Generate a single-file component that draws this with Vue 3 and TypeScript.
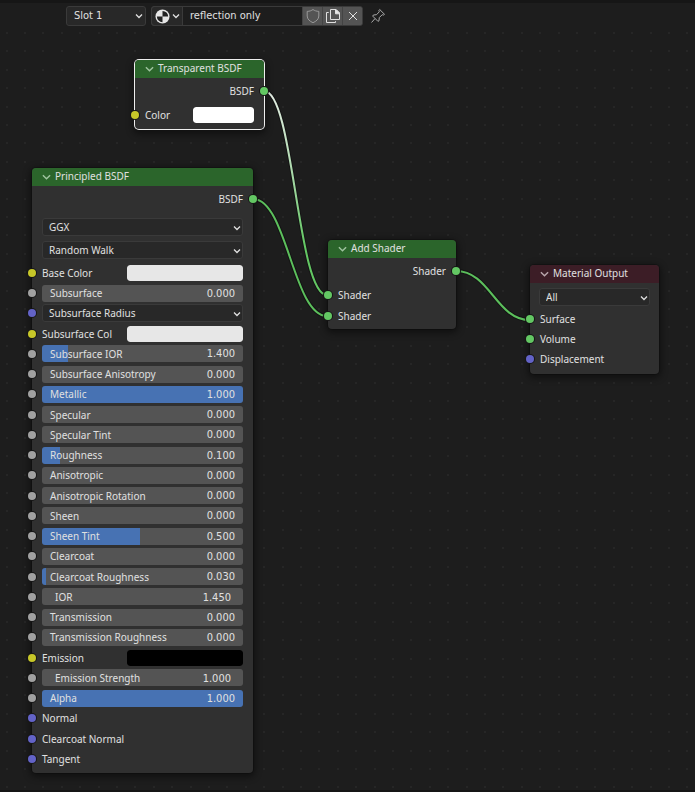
<script setup lang="ts">
import { reactive, ref } from 'vue'

type SocketKind = 'shader' | 'color' | 'value' | 'vector'
type RowKind = 'slider' | 'number' | 'swatch' | 'menu' | 'plain'

interface Row {
  id: string
  label: string
  kind: RowKind
  socket: SocketKind
  value?: string
  fill?: number
}

const slider = (id: string, label: string, value: string, fill = 0): Row => ({
  id, label, kind: 'slider', socket: 'value', value, fill,
})

const rows = reactive<Row[]>([
  slider('subsurface', 'Subsurface', '0.000'),
  { id: 'radius', label: 'Subsurface Radius', kind: 'menu', socket: 'vector' },
  { id: 'subcol', label: 'Subsurface Col', kind: 'swatch', socket: 'color', value: '#e7e7e7' },
  slider('subior', 'Subsurface IOR', '1.400', 13),
  slider('subaniso', 'Subsurface Anisotropy', '0.000'),
  slider('metallic', 'Metallic', '1.000', 100),
  slider('specular', 'Specular', '0.000'),
  slider('spectint', 'Specular Tint', '0.000'),
  slider('roughness', 'Roughness', '0.100', 9),
  slider('aniso', 'Anisotropic', '0.000'),
  slider('anisorot', 'Anisotropic Rotation', '0.000'),
  slider('sheen', 'Sheen', '0.000'),
  slider('sheentint', 'Sheen Tint', '0.500', 49),
  slider('clearcoat', 'Clearcoat', '0.000'),
  slider('ccrough', 'Clearcoat Roughness', '0.030', 2),
  { id: 'ior', label: 'IOR', kind: 'number', socket: 'value', value: '1.450' },
  slider('transmission', 'Transmission', '0.000'),
  slider('transrough', 'Transmission Roughness', '0.000'),
  { id: 'emission', label: 'Emission', kind: 'swatch', socket: 'color', value: '#000000' },
  { id: 'strength', label: 'Emission Strength', kind: 'number', socket: 'value', value: '1.000' },
  slider('alpha', 'Alpha', '1.000', 100),
  { id: 'normal', label: 'Normal', kind: 'plain', socket: 'vector' },
  { id: 'ccnormal', label: 'Clearcoat Normal', kind: 'plain', socket: 'vector' },
  { id: 'tangent', label: 'Tangent', kind: 'plain', socket: 'vector' },
])

const materialName = ref('reflection only')
const gridSteps = [4, 22, 41, 59, 78]
</script>

<template>
  <main class="editor">
    <svg class="backdrop" aria-hidden="true">
      <defs>
        <pattern id="dots" width="92" height="92" x="20" y="28" patternUnits="userSpaceOnUse">
          <template v-for="y in gridSteps" :key="y">
            <rect v-for="x in gridSteps" :key="x" :x="x" :y="y" width="2" height="2" />
          </template>
        </pattern>
        <linearGradient id="fade" gradientUnits="userSpaceOnUse" x1="264" y1="91" x2="327" y2="295">
          <stop offset="0" stop-color="#e8efe8" />
          <stop offset="0.35" stop-color="#b5dcb5" />
          <stop offset="0.75" stop-color="#63c763" />
        </linearGradient>
      </defs>
      <rect class="grid" x="0" y="28" width="100%" height="100%" fill="url(#dots)" />
      <g class="wire-edge">
        <path d="M264 91C294 91 297 295 327 295" />
        <path d="M253 199C287 199 293 316 327 316" />
        <path d="M456 271C490 271 496 320 530 320" />
      </g>
      <g class="wire">
        <path class="lit" d="M264 91C294 91 297 295 327 295" />
        <path d="M253 199C287 199 293 316 327 316" />
        <path d="M456 271C490 271 496 320 530 320" />
      </g>
    </svg>

    <header class="toolbar">
      <div class="menu slot">
        <select aria-label="Material slot"><option>Slot 1</option></select>
        <svg class="chev" viewBox="0 0 8 6"><path d="M1 1.5L4 4.5L7 1.5" /></svg>
      </div>
      <div class="datablock">
        <button class="browse" aria-label="Browse material">
          <svg class="ball" viewBox="0 0 16 16">
            <circle cx="8" cy="8" r="7.5" fill="#e6e6e6" />
            <path d="M8 8V2A6 6 0 0 1 14 8ZM8 8V14A6 6 0 0 1 2 8Z" fill="#222" />
          </svg>
          <svg class="chev" viewBox="0 0 8 6"><path d="M1 1.5L4 4.5L7 1.5" /></svg>
        </button>
        <input v-model="materialName" class="name" type="text" aria-label="Material name" />
        <button class="tool" aria-label="Fake user">
          <svg viewBox="0 0 16 16"><path class="dim" d="M8 1.5C6.4 2.7 4.6 3.3 2.2 3.4V8C2.2 11.2 4.8 13.3 8 14.7C11.2 13.3 13.8 11.2 13.8 8V3.4C11.4 3.3 9.6 2.7 8 1.5Z" /></svg>
        </button>
        <button class="tool" aria-label="New material">
          <svg viewBox="0 0 16 16">
            <path d="M5.5 1.5H11L14.5 5V11.5H5.5Z" />
            <path d="M10.5 1.5H11L14.5 5V5.8H10.5Z" fill="#e6e6e6" />
            <path d="M3.7 4.5H1.5V14.5H10.5V13.2" />
          </svg>
        </button>
        <button class="tool" aria-label="Unlink material">
          <svg viewBox="0 0 16 16"><path d="M4 4L12 12M12 4L4 12" /></svg>
        </button>
      </div>
      <button class="pin" aria-label="Pin">
        <svg viewBox="0 0 16 16"><path d="M9.7 1.5L14.5 6.3L13.4 7.1L12.2 6.7L9.3 9.6L9 12.8L7.9 13.3L2.7 8.1L3.4 7L6.5 6.7L9.3 3.8L8.9 2.6ZM5 10.6L1.5 14.5" /></svg>
      </button>
    </header>

    <section class="node transparent selected">
      <h2 class="title">
        <button aria-label="Collapse"><svg viewBox="0 0 10 6"><path d="M1 1L5 5L9 1" /></svg></button>
        Transparent BSDF
      </h2>
      <div class="row out first">BSDF<i class="socket shader" /></div>
      <div class="row color-row">
        <label for="tcolor">Color</label>
        <input id="tcolor" class="swatch" type="color" value="#ffffff" />
        <i class="socket color" />
      </div>
    </section>

    <section class="node principled">
      <h2 class="title">
        <button aria-label="Collapse"><svg viewBox="0 0 10 6"><path d="M1 1L5 5L9 1" /></svg></button>
        Principled BSDF
      </h2>
      <div class="row out first">BSDF<i class="socket shader" /></div>
      <div class="options">
        <div class="menu field">
          <select aria-label="Distribution"><option>GGX</option></select>
          <svg class="chev" viewBox="0 0 8 6"><path d="M1 1.5L4 4.5L7 1.5" /></svg>
        </div>
        <div class="menu field">
          <select aria-label="Subsurface method"><option>Random Walk</option></select>
          <svg class="chev" viewBox="0 0 8 6"><path d="M1 1.5L4 4.5L7 1.5" /></svg>
        </div>
      </div>
      <div class="row base">
        <label for="base">Base Color</label>
        <input id="base" class="swatch" type="color" value="#e7e7e7" />
        <i class="socket color" />
      </div>
      <div class="inputs">
        <div v-for="row in rows" :key="row.id" class="row">
          <div v-if="row.kind === 'slider'" class="prop" :style="{ '--fill': row.fill + '%' }">
            <input :id="row.id" type="range" min="0" max="100" :value="row.fill" />
            <label :for="row.id">{{ row.label }}</label>
            <output :for="row.id">{{ row.value }}</output>
          </div>
          <div v-else-if="row.kind === 'number'" class="prop number">
            <input :id="row.id" v-model="row.value" type="text" />
            <label :for="row.id">{{ row.label }}</label>
          </div>
          <div v-else-if="row.kind === 'menu'" class="menu field">
            <select :aria-label="row.label"><option>{{ row.label }}</option></select>
            <svg class="chev" viewBox="0 0 8 6"><path d="M1 1.5L4 4.5L7 1.5" /></svg>
          </div>
          <template v-else-if="row.kind === 'swatch'">
            <label :for="row.id">{{ row.label }}</label>
            <input :id="row.id" v-model="row.value" class="swatch" type="color" />
          </template>
          <span v-else>{{ row.label }}</span>
          <i class="socket" :class="row.socket" />
        </div>
      </div>
    </section>

    <section class="node add">
      <h2 class="title">
        <button aria-label="Collapse"><svg viewBox="0 0 10 6"><path d="M1 1L5 5L9 1" /></svg></button>
        Add Shader
      </h2>
      <div class="row out first">Shader<i class="socket shader" /></div>
      <div class="links">
        <div class="row">Shader<i class="socket shader" /></div>
        <div class="row">Shader<i class="socket shader" /></div>
      </div>
    </section>

    <section class="node output">
      <h2 class="title">
        <button aria-label="Collapse"><svg viewBox="0 0 10 6"><path d="M1 1L5 5L9 1" /></svg></button>
        Material Output
      </h2>
      <div class="options">
        <div class="menu field">
          <select aria-label="Target"><option>All</option></select>
          <svg class="chev" viewBox="0 0 8 6"><path d="M1 1.5L4 4.5L7 1.5" /></svg>
        </div>
      </div>
      <div class="links">
        <div class="row">Surface<i class="socket shader" /></div>
        <div class="row">Volume<i class="socket shader" /></div>
        <div class="row">Displacement<i class="socket vector" /></div>
      </div>
    </section>
  </main>
</template>

<style>
html, body, #app { height: 100%; }
body { margin: 0; background: #1d1d1d; }
</style>

<style scoped>
* { box-sizing: border-box; }
.editor {
  position: relative;
  min-height: 100vh;
  overflow: hidden;
  border-top: 3px solid #161616;
  border-bottom: 2px solid #151515;
  background: #1d1d1d;
  color: #e0e0e0;
  font: 10px/16px "Noto Sans", "DejaVu Sans", sans-serif;
}
.backdrop { position: absolute; inset: -3px 0 0; width: 100%; height: calc(100% + 3px); }
.backdrop pattern rect { fill: #262626; }
.wire-edge path, .wire path { fill: none; }
.wire-edge path { stroke: #141414; stroke-width: 4; }
.wire path { stroke: #5cbf5c; stroke-width: 2; }
.wire .lit { stroke: url(#fade); }

button, input, select { margin: 0; padding: 0; border: 0; background: none; color: inherit; font: inherit; outline: none; }
svg { display: block; fill: none; }

.toolbar { position: relative; display: flex; align-items: center; gap: 5px; padding: 3px 0 0 66px; font: 11px/16px "DejaVu Sans Condensed", "DejaVu Sans", sans-serif; }
.toolbar svg path { stroke: #e0e0e0; stroke-width: 1; }
.menu { display: grid; align-items: center; border: 1px solid #3a3a3a; border-radius: 3px; background: #282828; }
.menu > * { grid-area: 1 / 1; }
.menu select { appearance: none; width: 100%; height: 100%; padding-left: 6px; }
.chev { width: 8px; height: 6px; }
.chev path, .toolbar .chev path { stroke: #e0e0e0; stroke-width: 1.3; }
.menu .chev { justify-self: end; margin-right: 1px; pointer-events: none; }
.menu.slot { width: 80px; height: 20px; }
.menu.slot select { padding-left: 7px; }
.menu.slot .chev { margin-right: 2px; }
.datablock { display: flex; width: 212px; height: 20px; border: 1px solid #3a3a3a; border-radius: 3px; overflow: hidden; background: #545454; }
.browse { display: flex; align-items: center; gap: 2px; width: 31px; padding-left: 3px; background: #282828; border-right: 1px solid #3a3a3a; }
.browse svg { flex: none; }
.ball { width: 15px; height: 15px; }
.toolbar .ball path { stroke: none; }
.name { flex: 1; min-width: 0; padding-left: 7px; background: #1d1d1d; }
.tool { display: grid; place-items: center; width: 20px; background: #545454; border-left: 1px solid #444; }
.tool svg { width: 16px; height: 16px; }
.toolbar svg .dim { stroke: #999; }
.pin { margin-left: 2px; }
.pin svg { width: 16px; height: 16px; }
.toolbar .pin path { stroke: #aaa; }

.node { position: absolute; border-radius: 4px; background: #303030; box-shadow: 0 2px 7px 2px rgba(0, 0, 0, 0.45), 0 0 0 1px rgba(0, 0, 0, 0.2); }
.selected { box-shadow: 0 0 0 1px #eee, 0 3px 7px 2px rgba(0, 0, 0, 0.45); }
.transparent { left: 135px; top: 57px; width: 129px; height: 69px; }
.principled { left: 32px; top: 165px; width: 221px; height: 605px; }
.add { left: 328px; top: 237px; width: 128px; height: 89px; }
.output { left: 530px; top: 262px; width: 129px; height: 109px; }
.title { display: flex; align-items: center; gap: 4px; height: 18px; margin: 0; padding: 0 0 2px 10px; border-radius: 4px 4px 0 0; background: #2b652b; font: inherit; }
.output .title { background: #3c1d26; }
.title button { padding-top: 2px; }
.title svg { width: 9px; height: 6px; }
.title path { stroke: #9fc39f; stroke-width: 1.6; }
.output .title path { stroke: #b9a6ac; }

.row { position: relative; display: flex; align-items: center; justify-content: space-between; height: 20px; padding: 0 10px; }
.row.out { justify-content: flex-end; }
.first { margin-top: 3px; }
.color-row { margin-top: 4px; }
.color-row .swatch { width: 61px; }
.socket { position: absolute; left: -4px; top: calc(50% - 4px); width: 8px; height: 8px; border-radius: 50%; box-shadow: 0 0 0 1px #161616; }
.out .socket { left: auto; right: -4px; }
.shader { background: #63c763; }
.color { background: #c7c729; }
.value { background: #a1a1a1; }
.vector { background: #6363c7; }

.swatch { appearance: none; width: 116px; height: 16px; border-radius: 3px; overflow: hidden; }
.swatch::-webkit-color-swatch-wrapper { padding: 0; }
.swatch::-webkit-color-swatch { border: 0; border-radius: 3px; }
.options { display: grid; gap: 5px; padding: 9px 10px 0; }
.output .options { padding: 5px 9px 0; }
.field { flex: 1; height: 18px; }
.field select { padding-bottom: 1px; }
.base { margin-top: 4px; }
.inputs { display: grid; grid-auto-rows: 1fr; height: 486px; }
.inputs .row { height: auto; }
.links { padding-top: 3px; }
.add .links .row { height: 21px; }

.prop { flex: 1; display: grid; align-items: center; height: 17px; border-radius: 3px; overflow: hidden; background: linear-gradient(to right, #4772b3 var(--fill, 0%), #545454 var(--fill, 0%)); }
.prop > * { grid-area: 1 / 1; }
.prop label { justify-self: start; padding-left: 8px; pointer-events: none; }
.prop output, .number input { font: 11px/16px "DejaVu Sans Condensed", "DejaVu Sans", sans-serif; }
.prop output { justify-self: end; padding: 1px 8px 0 0; pointer-events: none; }
.prop input { width: 100%; height: 100%; }
.prop input[type="range"] { appearance: none; }
.prop input[type="range"]::-webkit-slider-thumb { appearance: none; width: 1px; height: 1px; }
.number input { padding: 1px 12px 0 0; text-align: right; }
.number label { padding-left: 13px; }
</style>
